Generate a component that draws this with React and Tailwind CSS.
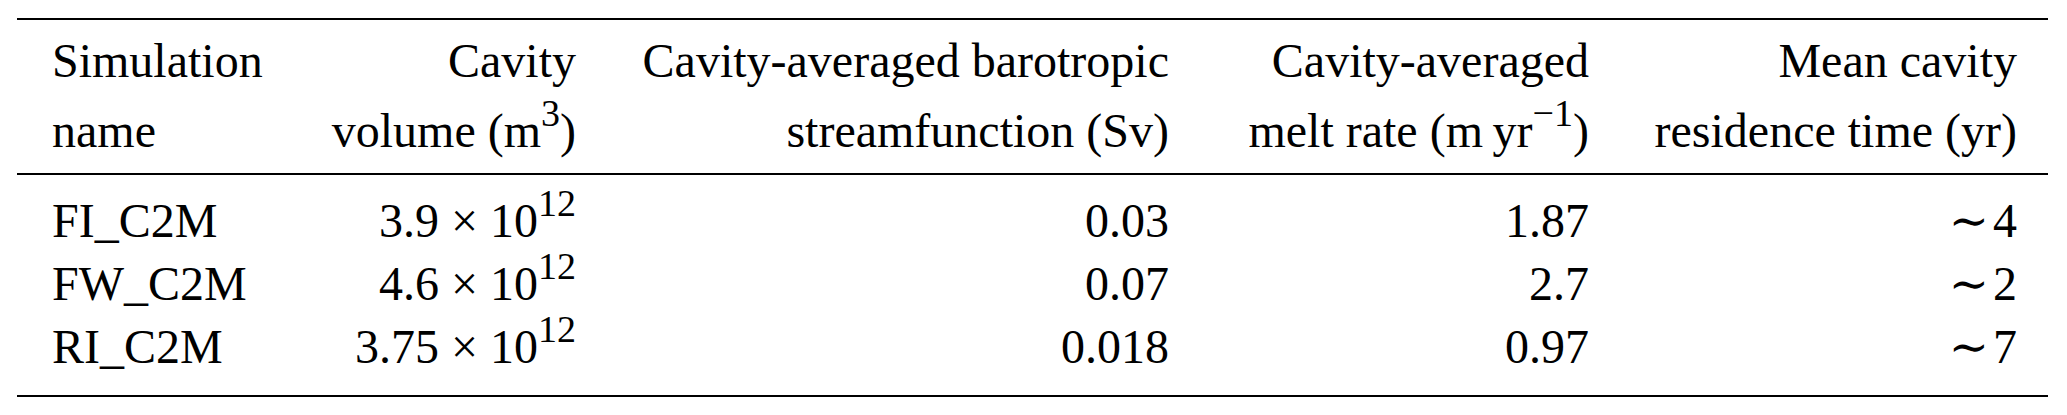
const rows = [
  { name: "FI_C2M", vol: "3.9", psi: "0.03", melt: "1.87", time: "4" },
  { name: "FW_C2M", vol: "4.6", psi: "0.07", melt: "2.7", time: "2" },
  { name: "RI_C2M", vol: "3.75", psi: "0.018", melt: "0.97", time: "7" },
];

const Sup = ({ children }) => (
  <span className="relative -top-[21px] text-[38px] leading-none">
    {children}
  </span>
);

const App = () => {
  return (
    <div
      className="w-[2067px] h-[415px] bg-white pt-[18px] text-black"
      style={{ fontFamily: '"Liberation Serif", "DejaVu Serif", serif' }}
    >
      <div className="ml-[17px] w-[2031px] border-t-2 border-b-2 border-black text-[48px]">
        {/* header */}
        <div className="grid grid-cols-[254px_270px_593px_420px_428px] pl-[35px] pr-[31px] pt-[6px] pb-[7px] border-b-2 border-black leading-[70px]">
          <div>
            Simulation
            <br />
            name
          </div>
          <div className="text-right">
            Cavity
            <br />
            volume (m<Sup>3</Sup>)
          </div>
          <div className="text-right">
            Cavity-averaged barotropic
            <br />
            streamfunction (Sv)
          </div>
          <div className="text-right">
            Cavity-averaged
            <br />
            melt rate (m{"\u2009"}yr<Sup>{"\u22121"}</Sup>)
          </div>
          <div className="text-right">
            Mean cavity
            <br />
            residence time (yr)
          </div>
        </div>
        {/* body */}
        <div className="grid grid-cols-[254px_270px_593px_420px_428px] pl-[35px] pr-[31px] pt-[14px] pb-[17px] leading-[63px]">
          {rows.map((r) => (
            <div key={r.name} className="contents">
              <div>{r.name}</div>
              <div className="text-right whitespace-nowrap">
                {r.vol} × 10<Sup>12</Sup>
              </div>
              <div className="text-right">{r.psi}</div>
              <div className="text-right">{r.melt}</div>
              <div className="text-right">
                <span className="mr-[4px]">{"\u223C"}</span>
                {r.time}
              </div>
            </div>
          ))}
        </div>
      </div>
    </div>
  );
};

export default App;
